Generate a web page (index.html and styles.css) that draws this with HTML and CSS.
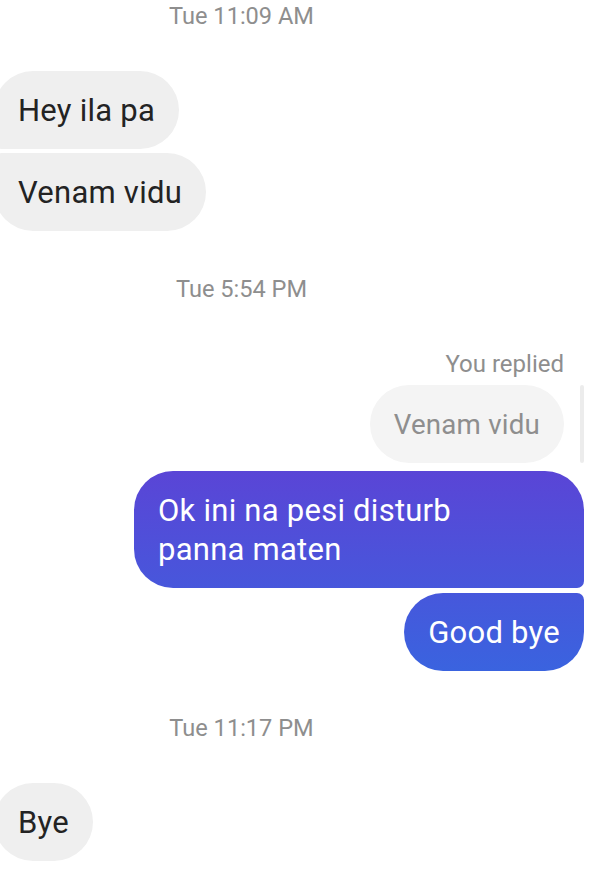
FILE: index.html
```html
<!DOCTYPE html>
<html>
<head>
<meta charset="utf-8">
<link rel="stylesheet" href="styles.css">
</head>
<body>
<div class="thread">
  <div class="stamp stamp-first">Tue 11:09 AM</div>
  <div class="row left"><div class="bubble in in-first">Hey ila pa</div></div>
  <div class="row left gap-sm"><div class="bubble in in-last">Venam vidu</div></div>

  <div class="stamp stamp-mid">Tue 5:54 PM</div>
  <div class="replied">You replied</div>
  <div class="row right reply-row">
    <div class="bubble quoted">Venam vidu</div>
    <div class="quote-bar"></div>
  </div>
  <div class="row right gap-md"><div class="bubble out out-first">Ok ini na pesi disturb panna maten</div></div>
  <div class="row right gap-sm2"><div class="bubble out out-last">Good bye</div></div>

  <div class="stamp stamp-last">Tue 11:17 PM</div>
  <div class="row left"><div class="bubble in">Bye</div></div>
</div>
</body>
</html>
```

FILE: styles.css
```css
html, body {
  margin: 0;
  padding: 0;
  background: #ffffff;
}
body {
  width: 601px;
  height: 878px;
  overflow: hidden;
  font-family: Roboto, "Noto Sans", sans-serif;
}
.thread {
  display: flex;
  flex-direction: column;
  padding-top: 3px;
}
.stamp {
  font-size: 23.6px;
  line-height: 27px;
  color: #8e8e8e;
  text-align: center;
  padding-right: 118px;
}
.stamp-first { margin-bottom: 41px; }
.stamp-mid { margin-top: 45px; }
.stamp-last { margin-top: 44px; margin-bottom: 41px; }

.row {
  display: flex;
}
.row.left {
  justify-content: flex-start;
  margin-left: -6px;
}
.row.right {
  justify-content: flex-end;
  padding-right: 17px;
}
.gap-sm { margin-top: 4px; }
.gap-md { margin-top: 8px; }
.gap-sm2 { margin-top: 5px; }

.bubble {
  font-size: 31px;
  letter-spacing: 0.25px;
  line-height: 39px;
  padding: 19.5px 24px;
  border-radius: 39px;
  box-sizing: border-box;
}
.in {
  background: #efefef;
  color: #232323;
}
.in-first { border-bottom-left-radius: 8px; }
.in-last { border-top-left-radius: 8px; }

.replied {
  margin-top: 48px;
  font-size: 24px;
  line-height: 26px;
  color: #8e8e8e;
  text-align: right;
  padding-right: 37px;
}
.reply-row {
  margin-top: 8px;
  align-items: stretch;
  gap: 16px;
}
.quoted {
  background: #f4f4f4;
  color: #8e8e8e;
  font-size: 27.7px;
  letter-spacing: 0.2px;
}
.quote-bar {
  width: 4px;
  background: #ececec;
  border-radius: 2px;
}

.out {
  color: #ffffff;
  background: linear-gradient(180deg, #5a45d6 471px, #3a63df 670px);
  background-attachment: fixed;
}
.out-first {
  width: 450px;
  padding-right: 64px;
  border-bottom-right-radius: 7px;
}
.out-last {
  border-top-right-radius: 7px;
}
```
